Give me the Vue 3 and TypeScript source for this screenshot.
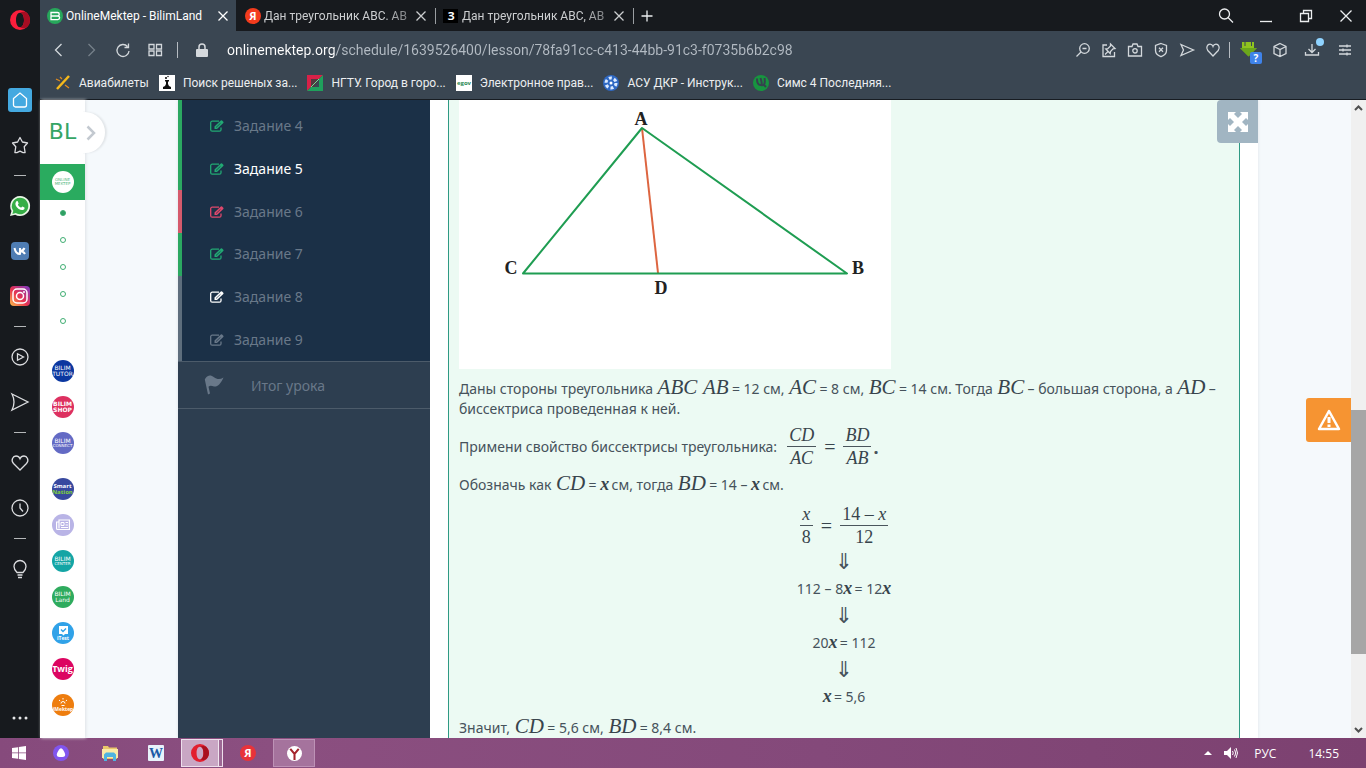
<script setup lang="ts">
import { ref } from 'vue'

interface Task { label: string; state: 'ok' | 'bad' | 'todo' | 'open'; active?: boolean }
interface Brand { id: string; color: string; top?: string; bottom?: string; gap?: boolean }

const address = ref('onlinemektep.org/schedule/1639526400/lesson/78fa91cc-c413-44bb-91c3-f0735b6b2c98')

const tasks: Task[] = [
  { label: 'Задание 4', state: 'ok' },
  { label: 'Задание 5', state: 'ok', active: true },
  { label: 'Задание 6', state: 'bad' },
  { label: 'Задание 7', state: 'ok' },
  { label: 'Задание 8', state: 'open' },
  { label: 'Задание 9', state: 'todo' },
]

const brands: Brand[] = [
  { id: 'tutor', color: '#0b37a0', top: 'BILIM', bottom: 'TUTOR' },
  { id: 'shop', color: '#dd3060', top: 'BILIM', bottom: 'SHOP' },
  { id: 'connect', color: '#636ac4', top: 'BILIM', bottom: 'CONNECT', gap: true },
  { id: 'smart', color: '#38499f', top: 'Smart', bottom: 'Nation' },
  { id: 'news', color: '#b9b4e6' },
  { id: 'center', color: '#14a5a5', top: 'BILIM', bottom: 'CENTER' },
  { id: 'land', color: '#2fab5e', top: 'BILIM', bottom: 'Land' },
  { id: 'itest', color: '#30a2e8' },
  { id: 'twig', color: '#dc0561', top: 'Twig' },
  { id: 'imektep', color: '#ee7d0e' },
]

const bookmarks = [
  { id: 'avia', label: 'Авиабилеты' },
  { id: 'flask', label: 'Поиск решеных за...' },
  { id: 'ngtu', label: 'НГТУ. Город в горо...' },
  { id: 'egov', label: 'Электронное прав...' },
  { id: 'asu', label: 'АСУ ДКР - Инструк...' },
  { id: 'ut', label: 'Симс 4 Последняя...' },
]
</script>

<template>
  <div class="desktop">
    <div class="browser">
      <aside class="opera">
        <button class="cell brand" aria-label="Opera">
          <svg width="20" height="20" viewBox="0 0 20 20"><path fill="#fa1e3c" fill-rule="evenodd" d="M10 0a10 10 0 1 0 0 20a10 10 0 1 0 0-20zM10 2.800c2.500 0 4 3.200 4 7.200s-1.500 7.200-4 7.200s-4-3.200-4-7.200s1.500-7.200 4-7.200z"/><path fill="#a70d22" d="M10 2.800c6-3.500 10 2 10 7.200s-4 10.700-10 7.200c2.500 0 4-3.200 4-7.200s-1.500-7.200-4-7.200z"/></svg>
        </button>
        <button class="cell home" aria-label="Home">
          <span class="tile"><svg class="line" width="18" height="18" viewBox="0 0 18 18"><path d="M2.500 7.500L9 2l6.500 5.500V14a2 2 0 0 1-2 2h-9a2 2 0 0 1-2-2z"/></svg></span>
        </button>
        <button class="cell" aria-label="Favourites"><svg class="line" width="18" height="18" viewBox="0 0 18 18"><path stroke-linejoin="round" d="M9 1.500l2.400 4.500 5.100 1-3.300 3.700.9 5.800-2 .2L9 15.200l-3.100 1.500-2-.2.900-5.800L1.500 7l5.100-1z"/></svg></button>
        <hr />
        <button class="cell" aria-label="WhatsApp"><svg width="20" height="20" viewBox="0 0 20 20"><path fill="#e9f7e6" d="M10 0a10 10 0 1 1-4.800 18.700L0 20l1.500-5A10 10 0 0 1 10 0z"/><path fill="#36ae46" d="M10 1.700a8.300 8.300 0 1 1-4.300 15.400l-3.300.8.900-3.200A8.300 8.300 0 0 1 10 1.700z"/><path fill="#fff" d="M6.300 5.500c.6-.7 1.300-.5 1.500 0l.8 1.700c.2.500-.7 1.200-.7 1.500.7 1.400 1.700 2.300 3.200 2.900.4 0 1-1.200 1.400-1.100l1.900.9c.5.400 0 1.700-.6 2.200-1.400 1-3.500.4-5.100-.7-1.500-1-2.800-2.800-3.100-4-.4-1.300 0-2.600.7-3.400z"/></svg></button>
        <button class="cell" aria-label="VK"><svg width="18" height="18" viewBox="0 0 18 18"><rect width="18" height="18" rx="4" fill="#4f7db3"/><path fill="none" stroke="#fff" stroke-width="2" stroke-linejoin="round" d="M3.500 6c.6 3.200 2.500 6 5.500 6V6M9 9.200c2.200-.2 3.600-1.200 4.500-3.200M9 9.200c2.500 0 4 1 5 2.800"/></svg></button>
        <button class="cell" aria-label="Instagram"><svg width="20" height="20" viewBox="0 0 20 20"><defs><linearGradient id="insta" x1="0" y1="1" x2="1" y2="0"><stop offset="0" stop-color="#fdc04b"/><stop offset=".45" stop-color="#e8324f"/><stop offset="1" stop-color="#7a3bc8"/></linearGradient></defs><rect width="20" height="20" rx="4" fill="url(#insta)"/><g fill="none" stroke="#fff" stroke-width="1.500"><rect x="3" y="3" width="14" height="14" rx="4"/><circle cx="10" cy="10" r="3.500"/></g><circle cx="14" cy="6" r="1" fill="#fff"/></svg></button>
        <hr />
        <button class="cell" aria-label="Player"><svg class="line" width="18" height="18" viewBox="0 0 18 18"><circle cx="9" cy="9" r="8"/><path d="M6.500 5.800v6.400L12.500 9z"/></svg></button>
        <button class="cell" aria-label="Flow"><svg class="line" width="18" height="18" viewBox="0 0 18 18"><path d="M1 1l16 8L1 17c2.500-5 2.500-11 0-16z"/></svg></button>
        <hr />
        <button class="cell" aria-label="Pinboards"><svg class="line" width="18" height="18" viewBox="0 0 18 18"><path d="M9 16L2.500 9.500C-.5 6 2 2 5 2c2 0 3.300 1 4 2.700C9.700 3 11 2 13 2c3 0 5.500 4 2.500 7.500z"/></svg></button>
        <button class="cell" aria-label="History"><svg class="line" width="18" height="18" viewBox="0 0 18 18"><circle cx="9" cy="9" r="8"/><path d="M9 4.500V9l3 3.500"/></svg></button>
        <hr />
        <button class="cell" aria-label="Tips"><svg class="line" width="16" height="20" viewBox="0 0 16 20"><path d="M5 13.500C3 11.500 2 10 2 7.500a6 6 0 1 1 12 0c0 2.500-1 4-3 6zM5.500 16h5M6 18.500h4"/></svg></button>
        <button class="cell more" aria-label="More"><svg width="16" height="4" viewBox="0 0 16 4" fill="#e6e7e8"><circle cx="2" cy="2" r="1.500"/><circle cx="8" cy="2" r="1.500"/><circle cx="14" cy="2" r="1.500"/></svg></button>
      </aside>

      <div class="window">
        <header class="tabs">
          <button class="tab active">
            <svg width="16" height="16" viewBox="0 0 16 16"><circle cx="8" cy="8" r="8" fill="#27a75b"/><path d="M4 4.500h6.500a1.700 1.700 0 0 1 0 3.500H4zM4 8h6.800a1.800 1.800 0 0 1 0 3.600H4z" fill="none" stroke="#fff" stroke-width="1.300"/></svg>
            <span class="title">OnlineMektep - BilimLand</span>
            <svg class="line" width="10" height="10" viewBox="0 0 10 10"><path d="M.5.5l9 9M9.500.5l-9 9"/></svg>
          </button>
          <button class="tab">
            <svg width="16" height="16" viewBox="0 0 16 16"><circle cx="8" cy="8" r="8" fill="#f33c1d"/><text x="8" y="12" text-anchor="middle" class="ya">Я</text></svg>
            <span class="title fade">Дан треугольник ABC. AB</span>
            <svg class="line" width="10" height="10" viewBox="0 0 10 10"><path d="M.5.5l9 9M9.500.5l-9 9"/></svg>
          </button>
          <button class="tab">
            <svg width="16" height="16" viewBox="0 0 16 16"><rect y="1" width="15" height="14" fill="#000"/><text x="8" y="12" text-anchor="middle" class="ya">З</text></svg>
            <span class="title fade">Дан треугольник ABC, AB</span>
            <svg class="line" width="10" height="10" viewBox="0 0 10 10"><path d="M.5.5l9 9M9.500.5l-9 9"/></svg>
          </button>
          <button class="new" aria-label="New tab"><svg class="line" width="12" height="12" viewBox="0 0 12 12"><path d="M6 .5v11M.5 6h11"/></svg></button>
          <div class="controls">
            <button aria-label="Search tabs"><svg class="line" width="16" height="16" viewBox="0 0 16 16"><circle cx="6.500" cy="6" r="5"/><path d="M10 9.500l5 5"/></svg></button>
            <button aria-label="Minimize"><svg class="line" width="12" height="14" viewBox="0 0 12 14"><path d="M0 12.500h12"/></svg></button>
            <button aria-label="Restore"><svg class="line" width="12" height="12" viewBox="0 0 12 12"><path d="M.5 3.500h8v8h-8zM3.500 3.500v-3h8v8h-3"/></svg></button>
            <button aria-label="Close"><svg class="line" width="12" height="12" viewBox="0 0 12 12"><path d="M.5.5l11 11M11.500.5l-11 11"/></svg></button>
          </div>
        </header>

        <div class="toolbar">
          <button aria-label="Back"><svg class="line" width="14" height="14" viewBox="0 0 14 14"><path d="M9.500 1l-6 6 6 6"/></svg></button>
          <button class="off" aria-label="Forward"><svg class="line" width="14" height="14" viewBox="0 0 14 14"><path d="M4.500 1l6 6-6 6"/></svg></button>
          <button aria-label="Reload"><svg class="line" width="14" height="14" viewBox="0 0 14 14"><path d="M11.500 3.500a6 6 0 1 0 1.500 4.500M12.500.500v4h-4"/></svg></button>
          <button aria-label="Speed dial"><svg class="line" width="14" height="12" viewBox="0 0 14 12"><path d="M1 .5h5v4.500H1zM8.500.5h5v4.500h-5zM1 7h5v4.500H1zM8.500 7h5v4.500h-5z"/></svg></button>
          <span class="rule"></span>
          <svg class="lock" width="12" height="14" viewBox="0 0 12 14"><path fill="#d5d9dd" d="M1 6h10a1 1 0 0 1 1 1v6a1 1 0 0 1-1 1H1a1 1 0 0 1-1-1V7a1 1 0 0 1 1-1z"/><path fill="none" stroke="#d5d9dd" stroke-width="1.500" d="M3 6V4a3 3 0 0 1 6 0v2"/></svg>
          <input v-model="address" class="url" type="text" aria-label="Address" spellcheck="false" />
          <div class="tools">
            <button aria-label="Zoom"><svg class="line" width="14" height="14" viewBox="0 0 14 14"><circle cx="8.500" cy="5.500" r="4.800"/><path d="M5 9L.5 13.500M6.500 5.500h4"/></svg></button>
            <button aria-label="Pin"><svg class="line" width="14" height="14" viewBox="0 0 14 14"><path d="M5 2H1v11.500h11.500V9M8.500 1l4.500 4.500-2 .3L8.500 8.500l-.3 2L3.800 6l2-.3L8.500 3zM6 8.500l-3 3"/></svg></button>
            <button aria-label="Snapshot"><svg class="line" width="14" height="14" viewBox="0 0 14 14"><path d="M.5 3.500h3.500l1-2.500h4l1 2.500h3.500v9.500H.5z"/><circle cx="7" cy="7.800" r="2.200"/></svg></button>
            <button aria-label="Ad blocker"><svg class="line" width="14" height="14" viewBox="0 0 14 14"><path d="M7 .5l5.500 2v5c0 3-2.500 5-5.500 6.200C4 12.500 1.500 10.500 1.500 7.500v-5zM5 4.800l4 4M9 4.800l-4 4"/></svg></button>
            <button aria-label="Send"><svg class="line" width="14" height="14" viewBox="0 0 14 14"><path d="M1 1.500l12.500 5.500L1 12.500 3.500 7z"/></svg></button>
            <button aria-label="Like"><svg class="line" width="14" height="14" viewBox="0 0 14 14"><path d="M7 13L1.800 7.500C-.5 4.500 1.500 1.200 4 1.200c1.500 0 2.500.8 3 2.200.5-1.400 1.500-2.200 3-2.200 2.500 0 4.500 3.300 2.200 6.300z"/></svg></button>
          </div>
          <span class="rule"></span>
          <div class="extras">
            <button aria-label="SaveFrom"><svg width="24" height="24" viewBox="0 0 24 24"><path fill="#8fc31f" d="M4 2h12v6h3l-8.500 8.500L2 8h2z"/><path fill="#4f8f17" d="M2 8h17l-8.500 8.500z" opacity=".55"/><path stroke="#3a4652" d="M7 2v4M13.500 2v4"/><rect x="12" y="12" width="12" height="12" rx="2" fill="#3f83ea"/><text x="18" y="22" text-anchor="middle" class="badge">?</text></svg></button>
            <button aria-label="Extensions"><svg class="line" width="14" height="14" viewBox="0 0 14 14"><path d="M7 .5l6 3v7l-6 3-6-3v-7zM1 3.500l6 3 6-3M7 6.500v7"/></svg></button>
            <button aria-label="Downloads"><svg class="line" width="20" height="20" viewBox="0 0 20 20"><path d="M8 6v8M4.500 11L8 14.500l3.500-3.500M1.500 14v3h13v-3"/><circle cx="16" cy="4" r="4" fill="#8fd3ff" stroke="none"/></svg></button>
            <button aria-label="Easy setup"><svg class="line" width="12" height="12" viewBox="0 0 12 12"><path d="M0 2h12M0 6h12M0 10h12M8 .5v3M4 4.500v3M8 8.500v3"/></svg></button>
          </div>
        </div>

        <nav class="bookmarks">
          <a v-for="b in bookmarks" :key="b.id" href="#" :class="b.id">
            <svg width="16" height="16" viewBox="0 0 16 16">
              <template v-if="b.id === 'avia'"><path stroke="#f5b91c" stroke-width="2.500" d="M2 14L14 1"/><path stroke="#e28b1d" stroke-width="1.200" d="M1 4l4 2M10 10l4 3M5 2l2 2"/></template>
              <template v-else-if="b.id === 'flask'"><rect width="16" height="16" fill="#fff"/><path fill="#111" d="M6 5h4v1l-1 1v2l1 2 2 1v2H4v-2l2-1 1-2V7L6 6z"/><circle cx="7" cy="3" r="1"/><circle cx="9" cy="1.500" r=".7"/></template>
              <template v-else-if="b.id === 'ngtu'"><path fill="#d82148" d="M0 0h16l-4 4H4v8l-4 4z"/><path fill="#1fa05c" d="M16 0v16H0l4-4h8V4z"/><path fill="#53393f" d="M4 4h8l-5 8H4z"/><path stroke="#6fe09b" stroke-width="1" d="M12 4L4 12"/></template>
              <template v-else-if="b.id === 'egov'"><rect width="16" height="16" fill="#fff"/><text x="8" y="10" text-anchor="middle" class="egov-text">egov</text></template>
              <template v-else-if="b.id === 'asu'"><circle cx="8" cy="8" r="8" fill="#2f69c4"/><circle cx="8" cy="8" r="5" fill="none" stroke="#dcebff" stroke-width="3" stroke-dasharray="3 2.200"/><circle cx="8" cy="8" r="1.500" fill="#fff"/></template>
              <template v-else><circle cx="8" cy="8" r="8" fill="#17953f"/><path fill="none" stroke="#36424e" stroke-width="2" d="M4 3.500c0 4 1 6.500 3.500 6.500S8 5 7.500 3M8 10c3 1 4.500-1 3.500-7M11 10l2 2"/></template>
            </svg>
            <span>{{ b.label }}</span>
          </a>
        </nav>

        <div class="page">
          <aside class="rail">
            <a class="bl" href="#">BL</a>
            <button class="expand" aria-label="Развернуть"><svg width="10" height="16" viewBox="0 0 10 16"><path fill="none" stroke="#c3c9d0" stroke-width="2.500" d="M1.500 1.500L8 8l-6.500 6.500"/></svg></button>
            <a class="current" href="#"><span class="disc"><span>ONLINE</span><span>MEKTEP</span></span></a>
            <ul class="dots"><li v-for="n in 5" :key="n" :class="{ on: n === 1 }"></li></ul>
            <div class="brands">
              <a v-for="b in brands" :key="b.id" href="#" class="disc" :class="[b.id, { gap: b.gap }]" :style="{ background: b.color }">
                <span v-if="b.top">{{ b.top }}</span>
                <span v-if="b.bottom">{{ b.bottom }}</span>
                <svg v-if="b.id === 'news'" width="14" height="12" viewBox="0 0 14 12"><path fill="none" stroke="#fff" stroke-width="1.200" d="M3 1h10.400v9.500H1.500A1 1 0 0 1 .6 9.500V3H3zM3 3v6.500"/><path fill="none" stroke="#fff" d="M5 3.500h3v3H5zM9.500 3.500h2.500M9.500 6h2.500M5 8.500h7"/></svg>
                <svg v-if="b.id === 'itest'" width="14" height="16" viewBox="0 0 14 16"><path fill="#fff" d="M3 1h9v8H9l-1.500 1.500L6 9H3z"/><path fill="none" stroke="#30a2e8" stroke-width="1.400" d="M5 4.500l2 2 3-3"/><text x="7" y="15" text-anchor="middle">iTest</text></svg>
                <svg v-if="b.id === 'imektep'" width="20" height="16" viewBox="0 0 20 16"><path fill="none" stroke="#fff" d="M10 1v1.500M6 3l1.200 1M14 3l-1.200 1M8.500 8.500h3M8 6.500a2 2 0 1 1 4 0"/><text x="10" y="14" text-anchor="middle">iMektep</text></svg>
              </a>
            </div>
          </aside>

          <div class="stage">
            <div class="lesson">
              <nav class="steps">
                <ul>
                  <li v-for="t in tasks" :key="t.label" :class="[t.state, { active: t.active }]">
                    <a href="#">
                      <svg width="14" height="12" viewBox="0 0 14 12"><path fill="none" stroke="currentColor" stroke-width="1.300" d="M9 1.200H2.200A1.500 1.500 0 0 0 .700 2.700v7A1.500 1.500 0 0 0 2.200 11.200h7.300A1.500 1.500 0 0 0 11 9.700V7.500"/><path fill="currentColor" d="M4.500 9V6.500L10.800.600a1 1 0 0 1 1.300 0l1.200 1.100a1 1 0 0 1 0 1.300L7 9z"/><path stroke="#1b3047" stroke-width=".7" d="M6 7.500l4.500-4.200"/></svg>
                      <span>{{ t.label }}</span>
                    </a>
                  </li>
                </ul>
                <a class="summary" href="#">
                  <svg width="20" height="20" viewBox="0 0 20 20"><path fill="currentColor" d="M1.500 3.200C4-.5 7-.2 10 2.200c3 2.300 6 2.400 9.500.3-2.500 6-6 9.500-9.500 9-2.200-.4-3.700-1.400-5.500.3L6 18.500l-2 1L.8 4.500z"/></svg>
                  <span>Итог урока</span>
                </a>
              </nav>

              <main class="content">
                <button class="full" aria-label="На весь экран"><svg width="20" height="20" viewBox="0 0 20 20"><path fill="#fff" d="M0 0h8L6 2l4 4 4-4-2-2h8v8l-2-2-4 4 4 4 2-2v8h-8l2-2-4-4-4 4 2 2H0v-8l2 2 4-4-4-4-2 2z"/></svg></button>
                <article>
                  <svg class="figure" width="432" height="269" viewBox="0 -1 432 269" role="img" aria-label="Треугольник ABC">
                    <rect y="-1" width="432" height="269" fill="#fff"/>
                    <path d="M183 27L199 172" stroke="#dd6540" stroke-width="2"/>
                    <path d="M64 172.500L183 27l205 145.500z" fill="none" stroke="#1f9d52" stroke-width="2" stroke-linejoin="round"/>
                    <text x="182" y="24">A</text><text x="52" y="173">C</text><text x="399" y="173">B</text><text x="202" y="193">D</text>
                  </svg>
                  <p>Даны стороны треугольника <i>ABC</i> <i>AB</i>&#8201;= 12 см, <i>AC</i>&#8201;= 8 см, <i>BC</i>&#8201;= 14 см. Тогда <i>BC</i>&#8201;– большая сторона, а <i>AD</i>&#8201;– биссектриса проведенная к ней.</p>
                  <p class="ratio">Примени свойство биссектрисы треугольника:
                    <span class="math"><span class="frac"><i>CD</i><i>AC</i></span><span>=</span><span class="frac"><i>BD</i><i>AB</i></span></span><b>.</b></p>
                  <p>Обозначь как <i>CD</i>&#8201;= <i class="x">x</i>&#8201;см, тогда <i>BD</i>&#8201;= 14 – <i class="x">x</i>&#8201;см.</p>
                  <div class="steps-math">
                    <span class="math"><span class="frac"><i>x</i><span>8</span></span><span>=</span><span class="frac"><span>14 – <i>x</i></span><span>12</span></span></span>
                    <span class="down">⇓</span>
                    <span>112 – 8<i class="x">x</i>&#8201;= 12<i class="x">x</i></span>
                    <span class="down">⇓</span>
                    <span>20<i class="x">x</i>&#8201;= 112</span>
                    <span class="down">⇓</span>
                    <span><i class="x">x</i>&#8201;= 5,6</span>
                  </div>
                  <p>Значит, <i>CD</i>&#8201;= 5,6 см, <i>BD</i>&#8201;= 8,4 см.</p>
                </article>
              </main>
            </div>
            <button class="report" aria-label="Сообщить об ошибке"><svg width="24" height="22" viewBox="0 0 24 22"><path fill="none" stroke="#fff" stroke-width="2.500" stroke-linejoin="round" d="M12 2l10 18H2z"/><path stroke="#fff" stroke-width="3" d="M12 8v6M12 15.500v2.500"/></svg></button>
          </div>

          <div class="scroll">
            <svg width="9" height="6" viewBox="0 0 9 6"><path fill="none" stroke="#505050" stroke-width="2" d="M1 5l3.500-3.500L8 5"/></svg>
            <div class="track"><div class="thumb"></div></div>
            <svg width="9" height="6" viewBox="0 0 9 6"><path fill="none" stroke="#505050" stroke-width="2" d="M1 1l3.500 3.500L8 1"/></svg>
          </div>
        </div>
      </div>
    </div>

    <footer class="taskbar">
      <button aria-label="Пуск"><svg width="14" height="14" viewBox="0 0 14 14" fill="#fff"><path d="M0 2l6-.8v5.300H0zM6.800 1.100L14 0v6.500H6.800zM0 7.300h6v5.400L0 12zM6.800 7.300H14V14l-7.200-1z"/></svg></button>
      <button aria-label="Алиса" class="alice"><svg width="16" height="16" viewBox="0 0 16 16"><circle cx="8" cy="8" r="8" fill="#8155ee"/><path fill="#fff" d="M8 3.200c1.500 0 4.500 4.800 4.200 6.800S10 12 8 12s-4 0-4.200-2S6.500 3.200 8 3.200z"/></svg></button>
      <button aria-label="Проводник" class="files"><svg width="16" height="16" viewBox="0 0 16 16"><path fill="#e9c76a" d="M1 1h5l1 1.500h8V14H1z"/><path fill="#fbe9a6" d="M0 4h16v9H0z"/><path fill="#4fb3e0" d="M2 16V9.500L4 7.500h8l2 2V16h-3v-4H5v4z"/></svg></button>
      <button aria-label="Word" class="word"><svg width="16" height="16" viewBox="0 0 16 16"><rect width="16" height="16" rx="1" fill="#e8f2fb"/><text x="8" y="13" text-anchor="middle">W</text></svg></button>
      <button aria-label="Opera" class="run on"><svg width="18" height="18" viewBox="0 0 20 20"><path fill="#e21f2f" fill-rule="evenodd" d="M10 0a10 10 0 1 0 0 20a10 10 0 1 0 0-20zM10 3c2.500 0 3.800 3.200 3.800 7s-1.300 7-3.800 7s-3.800-3.200-3.800-7s1.300-7 3.800-7z"/><path fill="#a9101f" d="M10 3c6-3 10 2 10 7s-4 10-10 7c2.500 0 3.800-3.200 3.800-7s-1.300-7-3.800-7z"/></svg></button>
      <button aria-label="Яндекс" class="yandex"><svg width="16" height="16" viewBox="0 0 16 16"><circle cx="8" cy="8" r="8" fill="#e8333a"/><text x="8" y="12" text-anchor="middle" class="ya">Я</text></svg></button>
      <button aria-label="Яндекс.Браузер" class="run"><svg width="15" height="15" viewBox="0 0 16 16"><circle cx="8" cy="8" r="8" fill="#fff"/><path fill="none" stroke="#a5252c" stroke-width="2.200" d="M3.500 3L8 8.500 12.500 3M8 8v7"/></svg></button>
      <div class="tray">
        <svg width="8" height="4" viewBox="0 0 8 4"><path fill="#fff" d="M0 4l4-4 4 4z"/></svg>
        <svg width="14" height="12" viewBox="0 0 14 12"><path fill="#fff" d="M0 4h3l4-4v12L3 8H0z"/><path fill="none" stroke="#fff" d="M8.500 4q1.500 2 0 4M10.500 2.500q2.500 3.500 0 7M12 1q3 5 0 10"/></svg>
        <span>РУС</span>
        <time>14:55</time>
      </div>
    </footer>
  </div>
</template>

<style>
body { margin: 0; overflow: hidden; }
</style>

<style scoped>
.desktop { display: flex; flex-direction: column; height: 100vh; overflow: hidden; font-family: Roboto, "Open Sans", sans-serif; font-size: 12px; color: #eceef0; }
button { display: flex; align-items: center; justify-content: center; padding: 0; border: 0; background: none; color: inherit; font: inherit; }
a { color: inherit; text-decoration: none; }
ul { margin: 0; padding: 0; list-style: none; }
svg { display: block; flex: none; overflow: visible; }
.line { fill: none; stroke: currentColor; stroke-width: 1.3; }
.ya { font: 700 11px "Open Sans", sans-serif; fill: #fff; }
.browser { display: flex; flex: 1; min-height: 0; }
.opera { display: flex; flex-direction: column; flex: 0 0 40px; background: #171a1e; color: #dcdde0; }
.cell { width: 40px; height: 45px; flex: none; }
.brand { height: 40px; margin-bottom: 37px; }
.tile { display: grid; place-items: center; width: 24px; height: 24px; border-radius: 3px; background: #44a9e0; color: #fff; }
hr { box-sizing: border-box; width: 12px; height: 1px; margin: 8px auto 7px; border: 0; background: #b5b7b9; flex: none; }
.more { height: 40px; margin-top: auto; }
.window { display: flex; flex-direction: column; flex: 1; min-width: 0; }
.tabs { display: flex; flex: none; height: 31px; background: #171a1e; }
.tab { box-sizing: border-box; width: 198px; padding: 0 10px 0 7px; gap: 3px; background: linear-gradient(#9a9ea2, #9a9ea2) right center / 1px 16px no-repeat; color: #ccced0; }
.tab.active { width: 196px; margin-right: 2px; padding-right: 8px; background: #3a4652; color: #fff; }
.title { flex: 1; white-space: nowrap; text-align: left; }
.fade { mask-image: linear-gradient(90deg, #000 80%, rgba(0, 0, 0, 0.5) 98%); }
.new { width: 26px; }
.controls { display: flex; margin-left: auto; }
.controls button { width: 40px; }
.toolbar { display: flex; align-items: center; flex: none; height: 37px; padding-left: 3px; background: #3a4652; color: #d3d8dc; }
.toolbar > button { width: 32px; height: 32px; }
.toolbar > .off { color: #76808a; }
.rule { flex: none; width: 1px; height: 16px; margin: 0 6px; background: #b6bcc2; }
.lock { margin: 0 19px 0 12px; }
.url { flex: 1; min-width: 0; padding: 0; border: 0; outline: 0; font: 14px Roboto, "Open Sans", sans-serif; background: linear-gradient(90deg, #fff 109px, #b3bbc3 109px); background-clip: text; -webkit-text-fill-color: transparent; }
.tools { display: flex; }
.tools button { width: 26px; height: 26px; }
.tools + .rule { margin: 0 8px 0 3px; }
.extras { display: flex; align-items: center; gap: 9px; padding-right: 15px; }
.extras button:first-child { margin-right: 2px; padding-top: 4px; }
.extras button:nth-child(3) { margin: 0 6px 0 8px; padding-bottom: 4px; }
.badge { font: 700 10px "Open Sans", sans-serif; fill: #fff; }
.bookmarks { display: flex; flex: none; gap: 10px; box-sizing: border-box; height: 32px; padding: 0 15px 1px; border-bottom: 1px solid #171c22; background: #3a4652; }
.bookmarks a { display: flex; align-items: center; gap: 8px; white-space: nowrap; }
.egov-text { font: 700 6px "Open Sans", sans-serif; fill: #2c8a55; }
.page { display: flex; flex: 1; min-height: 0; background: #f5f9fc; }
.rail { position: relative; z-index: 1; flex: 0 0 45px; background: #fff; box-shadow: 1px 0 3px #dfe3e6; }
.bl { display: block; height: 64px; line-height: 64px; text-align: center; font-family: "DejaVu Sans", sans-serif; font-size: 22px; color: #35a565; }
.expand { position: absolute; top: 12px; right: -20px; width: 40px; height: 41px; padding-left: 12px; border-radius: 50%; background: #fff; box-shadow: 2px 0 2px #e2e6e9; clip-path: inset(-3px -5px -3px 18px); }
.current { display: flex; align-items: center; justify-content: center; height: 36px; background: #2aab5f; }
.disc { display: flex; flex-direction: column; align-items: center; justify-content: center; width: 22px; height: 22px; margin: 0 auto; border-radius: 50%; overflow: hidden; font: 6px/6px "DejaVu Sans", sans-serif; color: #fff; }
.disc text { font: 700 5px "Open Sans", sans-serif; fill: #fff; }
.current .disc { margin: 0; background: #fff; color: #55b882; font-size: 4px; line-height: 4px; }
.disc.shop { font-weight: 700; }
.disc.smart { font: 700 6px/6px "Open Sans", sans-serif; }
.smart span + span { color: #7fd13b; }
.disc.connect span + span, .disc.center span + span { font-size: 4px; line-height: 4px; }
.disc.twig { font: 700 9px/12px "Open Sans", sans-serif; }
.dots { display: grid; justify-items: center; gap: 21px; padding: 10px 0 36px; }
.dots li { box-sizing: border-box; width: 6px; height: 6px; border: 1px solid #3fae72; border-radius: 50%; }
.dots .on { background: #2f9e63; }
.brands { display: grid; gap: 14px; }
.brands .gap { margin-bottom: 10px; }
.stage { position: relative; display: flex; flex: 1; justify-content: center; min-width: 0; overflow: hidden; }
.lesson { display: flex; flex: 0 1 1080px; min-width: 0; background: #fff; box-shadow: 0 0 3px #dde2e6; }
.steps { flex: 0 0 252px; background: #2d3e50; color: #697889; font: 14px "Noto Sans", "Open Sans", sans-serif; }
.steps ul { display: grid; grid-template-rows: repeat(6, 1fr); min-height: 256px; padding-top: 5px; background: #1b3047; box-shadow: inset 4px 0 #2ba861; }
.steps li { display: flex; align-items: center; padding-left: 28px; border-left: 4px solid #2ba861; }
.steps li a { display: flex; align-items: center; gap: 10px; }
.steps li span { line-height: 20px; }
.steps .bad { border-color: #d55a6c; }
.steps .open, .steps .todo { border-color: #5e6e7d; }
.ok svg { color: #22a974; }
.bad svg { color: #e0486c; }
.open svg { color: #fff; }
.active span { color: #fff; }
.summary { display: flex; align-items: center; gap: 27px; height: 46px; padding-left: 26px; border: solid #4c5b6a; border-width: 1px 0; }
.content { position: relative; flex: 1; min-width: 0; padding: 0 18px; }
article { padding: 0 10px 24px; border: solid #2f9a84; border-width: 0 1px; background: #ecfaf3; color: #46525b; font: 14px/20px "Noto Sans", "Open Sans", sans-serif; }
.figure text { font: 700 18px "Liberation Serif", serif; fill: #222; text-anchor: middle; }
p { margin: 0; }
.figure + p { padding-top: 10px; }
article i { margin: 0 1px; font: italic 21px/0 "Liberation Serif", serif; color: #38444c; }
article i.x { margin: 0; font-size: 18px; font-weight: 700; }
article b { font-size: 18px; line-height: 0; }
.ratio { display: flex; align-items: center; gap: 10px; margin: 5px 0 6px; }
.ratio b { margin-left: -8px; }
.math { display: flex; align-items: center; gap: 8px; font: 20px/20px "Liberation Serif", serif; color: #38444c; }
.frac { display: grid; justify-items: center; font-size: 18px; line-height: 22px; }
.frac > * { padding: 0 2px; line-height: 22px; }
.frac > :first-child { box-sizing: border-box; width: 100%; text-align: center; border-bottom: 1px solid #4a555c; }
.math .frac i { margin: 0; font-size: 18px; line-height: 22px; }
.steps-math { display: flex; flex-direction: column; align-items: center; gap: 7px; padding: 8px 0 11px; }
.steps-math .math { margin-bottom: -3px; }
.down { font-family: "DejaVu Sans", sans-serif; font-size: 22px; }
.full { position: absolute; top: 0; right: 0; width: 41px; height: 43px; border-radius: 4px 0 0 4px; background: #a1b5c2; }
.report { position: absolute; top: 298px; right: 0; width: 45px; height: 44px; border-radius: 3px 0 0 3px; background: #f69432; }
.scroll { display: flex; flex-direction: column; align-items: center; flex: 0 0 15px; padding: 5px 0; background: #f0f0f0; }
.track { display: flex; flex-direction: column; flex: 1; align-self: stretch; padding: 299px 0 73px; }
.thumb { flex: 1; background: #a6a6a6; }
.taskbar { display: flex; align-items: center; flex: none; height: 30px; padding-left: 12px; background: linear-gradient(90deg, #864a7c, #8b4f80 20%, #84497a 60%, #7c4170); color: #fff; font-family: "Open Sans", sans-serif; }
.alice { margin-left: 27px; }
.files { margin-left: 33px; }
.word { margin-left: 30px; }
.word text { font: 700 14px "Liberation Serif", serif; fill: #1b5aa7; }
.run { box-sizing: border-box; width: 42px; height: 28px; border: 1px solid #bd92b6; background: #a5739d; }
.run.on { margin-left: 17px; padding-right: 4px; background: linear-gradient(90deg, #c9a7c4 36px, #f0e6ef 36px, #f0e6ef 37px, #9d6894 37px); border-color: #eedfec; }
.yandex { margin: 0 17px; }
.tray { display: flex; align-items: center; gap: 12px; margin-left: auto; padding-right: 27px; }
.tray span { margin-left: 4px; }
.tray time { margin-left: 20px; }
</style>
